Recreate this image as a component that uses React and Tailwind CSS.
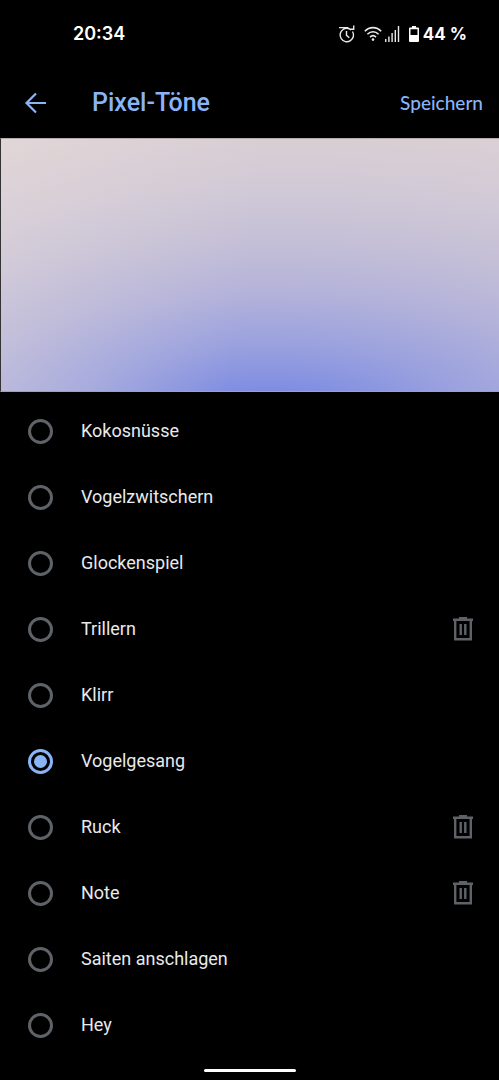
import React, { useState } from "react";

const SOUNDS = [
  { name: "Kokosnüsse" },
  { name: "Vogelzwitschern" },
  { name: "Glockenspiel" },
  { name: "Trillern", removable: true },
  { name: "Klirr" },
  { name: "Vogelgesang" },
  { name: "Ruck", removable: true },
  { name: "Note", removable: true },
  { name: "Saiten anschlagen" },
  { name: "Hey" },
];

function AlarmIcon() {
  return (
    <svg width="18" height="18" viewBox="0 0 18 18" fill="none" stroke="#e8eaed" strokeWidth="1.4" aria-hidden="true">
      <path d="M5 4.500a6.700 6.700 0 1 0 9.500 2M8.500 6v4.400l2.800 2.400M1 2.600h9.500M5 4.500C7 3 11 2.600 13 5M11.500 4.200h4.200V.5" />
    </svg>
  );
}

function WifiIcon() {
  return (
    <svg width="18" height="16" viewBox="0 0 18 16" fill="none" stroke="#e8eaed" strokeWidth="1.6" aria-hidden="true">
      <path d="M.8 5.2C5.4.4 12.6.4 17.2 5.2M3.4 8.2c3.2-3.3 8-3.3 11.2 0M6 11.1c1.8-1.7 4.2-1.7 6 0" />
      <circle cx="9" cy="13.6" r="1.3" fill="#e8eaed" stroke="none" />
    </svg>
  );
}

function SignalIcon() {
  return (
    <svg width="15" height="16" viewBox="0 0 15 16" fill="#e8eaed" aria-hidden="true">
      <path d="M0 13h1.4v3H0zM3.2 10.5h1.4V16H3.2zM6.4 7h1.4v9H6.4zM9.6 4H11v12H9.6zM12.8 0h1.4v16h-1.4z" />
    </svg>
  );
}

function BatteryIcon() {
  return (
    <svg width="10" height="16" viewBox="0 0 10 16" aria-hidden="true">
      <path fill="#fff" fillRule="evenodd" d="M3 0h4v1.5h2q1 0 1 1V15q0 1-1 1H1q-1 0-1-1V2.500q0-1 1-1h2zM1.500 3.200V9h7V3.200z" />
    </svg>
  );
}

function TrashIcon() {
  return (
    <svg width="22" height="24" viewBox="0 0 22 24" fill="none" stroke="#5f6368" aria-hidden="true">
      <path strokeWidth="2" d="M7 1h8" />
      <path strokeWidth="2.400" d="M1 2.800h20M3.200 3v19.300h15.600V3" />
      <path strokeWidth="2.400" d="M8.700 7v11M13.300 7v11" />
    </svg>
  );
}

function SoundRow({ sound, checked, onSelect }) {
  return (
    <li className="flex h-[66px] items-center pr-[25px] pl-7">
      <label className="flex flex-1 items-center gap-7 text-lg text-[#e8eaed]">
        <input
          type="radio"
          name="sound"
          checked={checked}
          onChange={onSelect}
          className="grid size-[25px] appearance-none place-items-center rounded-full border-3 border-[#5f6368] checked:border-[#8ab4f8] checked:before:size-[13px] checked:before:rounded-full checked:before:bg-[#8ab4f8]"
        />
        {sound.name}
      </label>
      {sound.removable && (
        <button type="button" aria-label={`${sound.name} löschen`}>
          <TrashIcon />
        </button>
      )}
    </li>
  );
}

export default function App() {
  const [selected, setSelected] = useState("Vogelgesang");

  return (
    <div className="min-h-screen bg-black font-['Roboto',sans-serif]">
      {/* Status bar */}
      <div className="flex h-[68px] items-center justify-between pr-8 pl-[73px] font-['Inter',sans-serif] text-lg font-semibold text-white">
        <span>20:34</span>
        <div className="flex items-center">
          <AlarmIcon />
          <span className="ml-2 flex gap-[3px]">
            <WifiIcon />
            <SignalIcon />
          </span>
          <span className="ml-[9px] flex items-center gap-1 text-[17px] font-bold">
            <BatteryIcon />
            44 %
          </span>
        </div>
      </div>

      {/* App bar */}
      <header className="flex h-[70px] items-center pr-4 pl-6 text-[#8ab4f8]">
        <button type="button" aria-label="Zurück">
          <svg width="24" height="24" viewBox="0 0 24 24" fill="none" stroke="currentColor" strokeWidth="2.200" aria-hidden="true">
            <path d="M22 12H3M12 2.500L2.500 12l9.500 9.500" />
          </svg>
        </button>
        <h1 className="ml-11 flex-1 text-[25px] font-medium">Pixel-Töne</h1>
        <button type="button" className="font-['Lato',sans-serif] text-[19px] font-medium">
          Speichern
        </button>
      </header>

      {/* Artwork */}
      <div className="h-[254px] border-t border-b border-l border-t-[#b5adb0] border-b-[#9c9ed6] border-l-[#333] bg-[linear-gradient(100deg,#f0e4dc4d,#f0e4dc00_50%),radial-gradient(820px_300px_at_54%_110%,#7a89e1,#808ee2_9%,#9aa1de_24%,#b3b2da_41%,#c4bfd7_58%,#d1c9d6_76%,#dbd1d4)]" />

      <ul className="pt-[6px]">
        {SOUNDS.map((sound) => (
          <SoundRow
            key={sound.name}
            sound={sound}
            checked={selected === sound.name}
            onSelect={() => setSelected(sound.name)}
          />
        ))}
      </ul>

      {/* Gesture handle */}
      <div className="flex justify-center pt-[11px] pb-2">
        <div className="h-[3px] w-[92px] rounded-full bg-white" />
      </div>
    </div>
  );
}
